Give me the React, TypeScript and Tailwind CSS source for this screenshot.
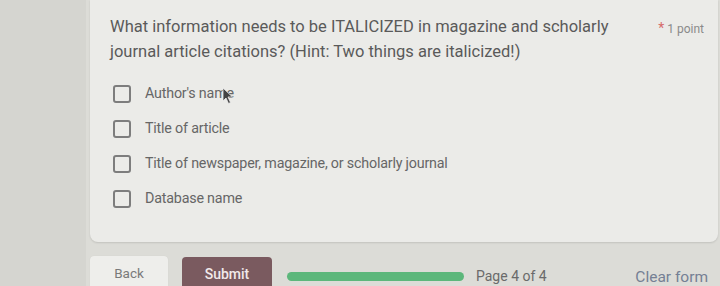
import React from "react";

const options = [
  "Author's name",
  "Title of article",
  "Title of newspaper, magazine, or scholarly journal",
  "Database name",
];

export default function App() {
  return (
    <div
      className="w-[720px] h-[286px] overflow-hidden flex bg-[#dcdcd7] text-[#555]"
      style={{ fontFamily: "Roboto, 'Noto Sans', sans-serif" }}
    >
      <div className="w-[86px] shrink-0 bg-[#d5d5d0]" />
      <div className="flex-1 flex flex-col pl-[4px] pr-[2px]">
        <div className="relative shrink-0 h-[242px] bg-[#ebebe8] rounded-b-[8px] shadow-[0_1px_2px_rgba(0,0,0,0.12)] pl-[20px] pr-[12px] pt-[14px]">
          <div className="flex justify-between">
            <div className="text-[16.5px] leading-[25px] text-[#5a5a5a]">
              What information needs to be ITALICIZED in magazine and scholarly
              <br />
              journal article citations? (Hint: Two things are italicized!)
            </div>
            <div className="text-[12px] leading-[25px] text-[#8a8a8a] pt-[2px] pr-[2px] whitespace-nowrap">
              <span className="text-[#d66a6a] text-[14px]">*</span> 1 point
            </div>
          </div>
          <div className="mt-[21px] flex flex-col gap-[17px] pl-[3px]">
            {options.map((o) => (
              <div key={o} className="flex items-center h-[18px]">
                <div className="w-[18px] h-[18px] border-2 border-[#7d7d7d] rounded-[3px] shrink-0" />
                <span className="ml-[14px] text-[14.3px] text-[#666] tracking-[-0.2px]">{o}</span>
              </div>
            ))}
          </div>
          <svg
            className="absolute left-[132px] top-[87px]"
            width="12"
            height="18"
            viewBox="0 0 12 18"
          >
            <path d="M1 1 L1 14 L4 11 L6.5 16.5 L8.5 15.5 L6 10 L10.5 10 Z" fill="#444" stroke="#eee" strokeWidth="0.8" />
          </svg>
        </div>
        <div className="flex items-start pt-[14px]">
          <div className="w-[78px] h-[36px] bg-[#eeeeeb] rounded-[4px] flex items-start justify-center pt-[7px] text-[13.5px] text-[#7a7a7a] shadow-[0_0_1px_rgba(0,0,0,0.1)]">
            Back
          </div>
          <div className="ml-[14px] mt-[1px] w-[90px] h-[36px] bg-[#7a5a5f] rounded-[4px] flex items-start justify-center pt-[7px] text-[14px] font-medium text-[#f1e9ea]">
            Submit
          </div>
          <div className="ml-[15px] mt-[16px] w-[177px] h-[9px] rounded-full bg-[#5cb77b]" />
          <div className="ml-[12px] mt-[10px] text-[14px] text-[#6a6a6a]">Page 4 of 4</div>
          <div className="ml-auto mr-[10px] mt-[11px] text-[15.5px] leading-[20px] text-[#758094]">Clear form</div>
        </div>
      </div>
    </div>
  );
}
